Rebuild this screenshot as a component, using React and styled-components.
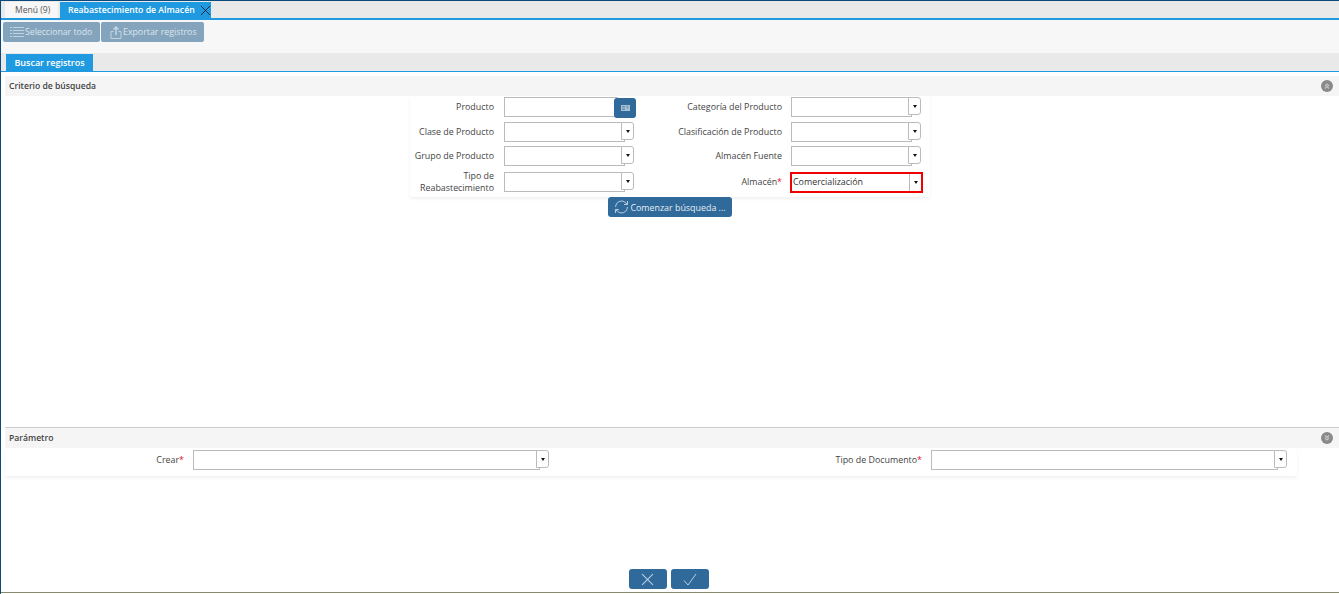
import React from "react";
import styled, { createGlobalStyle } from "styled-components";

const Global = createGlobalStyle`
  html, body { margin: 0; padding: 0; background: #fff; }
  body { font-family: "Open Sans", "Noto Sans", sans-serif; font-size: 8.9px; color: #333; }
  * { box-sizing: border-box; }
`;

const Page = styled.div`
  width: 1339px; height: 594px; overflow: hidden; display: flex; flex-direction: column;
  border-left: 1px solid #0a4a7c; border-top: 1px solid #0a4a7c; background: #fff;
`;
const TabBar = styled.div`
  flex: none; height: 19px; padding: 1px 0 0 4px; display: flex; gap: 2px; background: #e9e9e9; border-bottom: 2px solid #1f9ae0;
`;
const Tab = styled.div`
  height: 16px; display: flex; align-items: center; white-space: nowrap;
  background: ${p => (p.$active ? "#1f9ae0" : "#f7f7f7")};
  color: ${p => (p.$active ? "#fff" : "#555")};
  font-weight: ${p => (p.$active ? 600 : 400)};
  font-size: ${p => (p.$active ? 8.7 : 8.6)}px;
  width: ${p => p.$w}px; padding-left: ${p => p.$pad}px;
`;
const TabClose = styled.span`margin-left: auto; display: flex;`;
const Toolbar = styled.div`
  height: 33px; flex: none; background: #f7f7f7; padding: 2px 0 0 2px; display: flex; gap: 1px; align-items: flex-start;
`;
const ToolButton = styled.div`
  height: 20px; width: ${p => p.$w}px; background: #84a4be; border-radius: 2px; display: flex; align-items: center;
  color: #dbe4ec; font-size: ${p => p.$fs}px; padding-left: ${p => p.$pad}px; gap: 1px; white-space: nowrap;
`;
const SubBar = styled.div`
  height: 19px; flex: none; background: #e9e9e9; border-bottom: 1px solid #1f9ae0; padding: 1px 0 0 5px; display: flex;
`;
const SubTab = styled.div`
  width: 87px; height: 17px; background: #1f9ae0; color: #fff; font-weight: 600; font-size: 9px; display: flex; align-items: center; justify-content: center;
`;
const SectionHeader = styled.div`
  height: ${p => (p.$rule ? 21 : 20)}px; flex: none; margin-left: 4px; background: #f5f5f5; display: flex; align-items: center; justify-content: space-between;
  padding: 0 6px 1px 4px; font-weight: 600; font-size: 8.6px; color: #444;
  ${p => p.$rule && "border-top: 1px solid #ccc;"}
`;
const Circle = styled.span`
  width: 12px; height: 12px; border-radius: 50%; background: #8a8a8a; display: flex; align-items: center; justify-content: center;
`;
const Search = styled.section`
  flex: 1; margin-top: 4px; display: flex; flex-direction: column; align-items: center;
  & > ${SectionHeader} { align-self: stretch; }
`;
const Panel = styled.div`
  width: 520px; height: 101px; padding-top: 1px; box-shadow: 0 2px 3px rgba(0,0,0,.06);
  display: grid; grid-template-columns: 84px 140px 148px 148px; grid-template-rows: 25px 24px 26px 25px;
`;
const Label = styled.div`
  text-align: right; line-height: 12px; color: #444; height: 20px; font-size: 8.9px;
  display: flex; align-items: center; justify-content: flex-end;
`;
const Req = styled.span`color: #e8112d;`;
const Field = styled.div`
  margin-left: ${p => p.$ml}px; display: flex; height: 20px; align-items: flex-start;
  width: ${p => p.$w}px;
`;
const Input = styled.div`
  flex: 1; height: 20px; border: 1px solid #bbb; background: #fff; padding-left: 2px; line-height: 17px; color: #333;
`;
const Caret = styled.div`
  flex: none; width: 13px; height: 18px; margin-left: -4px; background: #fff; border: 1px solid #bbb; border-radius: 0 3px 3px 0;
  display: flex; align-items: center; justify-content: center;
  &::after { content: ""; width: 0; height: 0; border: 2.5px solid transparent; border-top: 3px solid #111; border-bottom: 0; }
`;
const Highlight = styled.div`
  margin-left: 8px; width: 133px; height: 21px; border: 2px solid #f00000; display: flex;
  ${Input} { border: 0; height: 17px; line-height: 15px; padding-left: 1px; }
  ${Caret} { height: 17px; border-width: 0 0 0 1px; border-radius: 0; width: 12px; margin-left: 0; margin-right: 0; }
`;
const Lookup = styled.div`
  flex: none; width: 22px; height: 20px; margin: 1px -2px 0 -4px; background: #2f6a9b; border-radius: 3px; display: flex; align-items: center; justify-content: center;
`;
const Blue = styled.div`
  width: ${p => p.$w}px; height: 20px; background: #2f6a9b; border-radius: 3px; color: #e6edf3; display: flex; align-items: center; justify-content: center; gap: 1px;
`;
const Params = styled.section`
  flex: none; height: 167px; display: flex; flex-direction: column;
`;
const ParamPanel = styled.div`
  margin: 0 42px 0 4px; height: 28px; padding-top: 2px; box-shadow: 0 2px 3px rgba(0,0,0,.06);
  display: grid; grid-template-columns: 179px 365px 373px 365px; flex: none;
`;
const Footer = styled.div`
  flex: 1; display: flex; justify-content: center; gap: 4px; align-items: flex-end; padding: 0 3px 3px 0;
`;
const BottomRule = styled.div`height: 1px; flex: none; background: #8c8a6e; margin-bottom: 1px;`;

const Ico = styled.svg`display: block; flex: none;`;
const ListIcon = () => (
  <Ico width="14" height="12" viewBox="0 0 14 12" stroke="#c3d2df" strokeWidth="1" fill="none">
    <path d="M0 1.5h2M0 4.5h2M0 7.5h2M0 10.5h2M3 1.5h11M3 4.5h11M3 7.5h11M3 10.5h11" />
  </Ico>
);
const ExportIcon = () => (
  <Ico width="12" height="13" viewBox="0 0 12 13" stroke="#c3d2df" strokeWidth="1" fill="none">
    <path d="M3.5 5.5H1v7h10v-7H8.5" />
    <path d="M6 9V1M3.5 3.5 6 1l2.5 2.5" strokeWidth="1.6" />
  </Ico>
);
const CloseIcon = ({ c = "#123", s = 10 }) => (
  <Ico width={s} height={s} viewBox="0 0 12 12" stroke={c} strokeWidth="1" fill="none">
    <path d="M1 1l10 10M11 1 1 11" />
  </Ico>
);
const Refresh = () => (
  <Ico width="15" height="14" viewBox="0 0 15 14" stroke="#b9cbdb" strokeWidth="1" fill="none">
    <path d="M1.5 7a6 6 0 0 1 10.5-4l1.5 1.5M13.5 1v3.5H10" />
    <path d="M13.5 7A6 6 0 0 1 3 11L1.5 9.5M1.5 13V9.5H5" />
  </Ico>
);
const Check = () => (
  <Ico width="14" height="13" viewBox="0 0 14 13" stroke="#b9cfe0" strokeWidth="1" fill="none">
    <path d="M1 7.5 5 12 13 1" />
  </Ico>
);
const Chevrons = ({ down }) => (
  <Ico width="6" height="6" viewBox="0 0 6 6" stroke="#c8c8c8" strokeWidth="1.1" fill="none" style={{ transform: down ? "rotate(180deg)" : "none" }}>
    <path d="M1 3 3 1l2 2M1 5.5l2-2 2 2" />
  </Ico>
);
const CardIcon = () => (
  <Ico width="9" height="8" viewBox="0 0 9 8" fill="#a9c0d4">
    <path d="M0 1h9v6H0z" />
    <path d="M1 2.5h3M1 4h3M1 5.5h3M5.5 2.5h2M5.5 4h2" stroke="#4d7ea7" strokeWidth=".7" />
  </Ico>
);

const Combo = ({ w = 130, ml = 10 }) => (
  <Field $w={w} $ml={ml}>
    <Input />
    <Caret />
  </Field>
);

export default function App() {
  return (
    <>
      <Global />
      <Page>
        <TabBar>
          <Tab $w={53} $pad={10}>Menú (9)</Tab>
          <Tab $active $w={151} $pad={8}>
            Reabastecimiento de Almacén
            <TabClose><CloseIcon s={11} /></TabClose>
          </Tab>
        </TabBar>
        <Toolbar>
          <ToolButton $w={97} $pad={7} $fs={8.7}><ListIcon />Seleccionar todo</ToolButton>
          <ToolButton $w={103} $pad={9} $fs={8.8}><ExportIcon />Exportar registros</ToolButton>
        </Toolbar>
        <SubBar><SubTab>Buscar registros</SubTab></SubBar>
        <Search>
          <SectionHeader>Criterio de búsqueda<Circle><Chevrons /></Circle></SectionHeader>
          <Panel>
            <Label>Producto</Label>
            <Field $w={130} $ml={10}>
              <Input />
              <Lookup><CardIcon /></Lookup>
            </Field>
            <Label>Categoría del Producto</Label>
            <Combo ml={9} />
            <Label>Clase de Producto</Label>
            <Combo />
            <Label>Clasificación de Producto</Label>
            <Combo ml={9} />
            <Label>Grupo de Producto</Label>
            <Combo />
            <Label>Almacén Fuente</Label>
            <Combo ml={9} />
            <Label><span>Tipo de<br />Reabastecimiento</span></Label>
            <Combo />
            <Label>Almacén<Req>*</Req></Label>
            <Highlight>
              <Input>Comercialización</Input>
              <Caret />
            </Highlight>
          </Panel>
          <Blue $w={124}><Refresh />Comenzar búsqueda ...</Blue>
        </Search>
        <Params>
          <SectionHeader $rule>Parámetro<Circle><Chevrons down /></Circle></SectionHeader>
          <ParamPanel>
            <Label>Crear<Req>*</Req></Label>
            <Combo ml={9} w={356} />
            <Label>Tipo de Documento<Req>*</Req></Label>
            <Combo ml={9} w={356} />
          </ParamPanel>
          <Footer>
            <Blue $w={38}><CloseIcon c="#b9cfe0" s={13} /></Blue>
            <Blue $w={38}><Check /></Blue>
          </Footer>
          <BottomRule />
        </Params>
      </Page>
    </>
  );
}
